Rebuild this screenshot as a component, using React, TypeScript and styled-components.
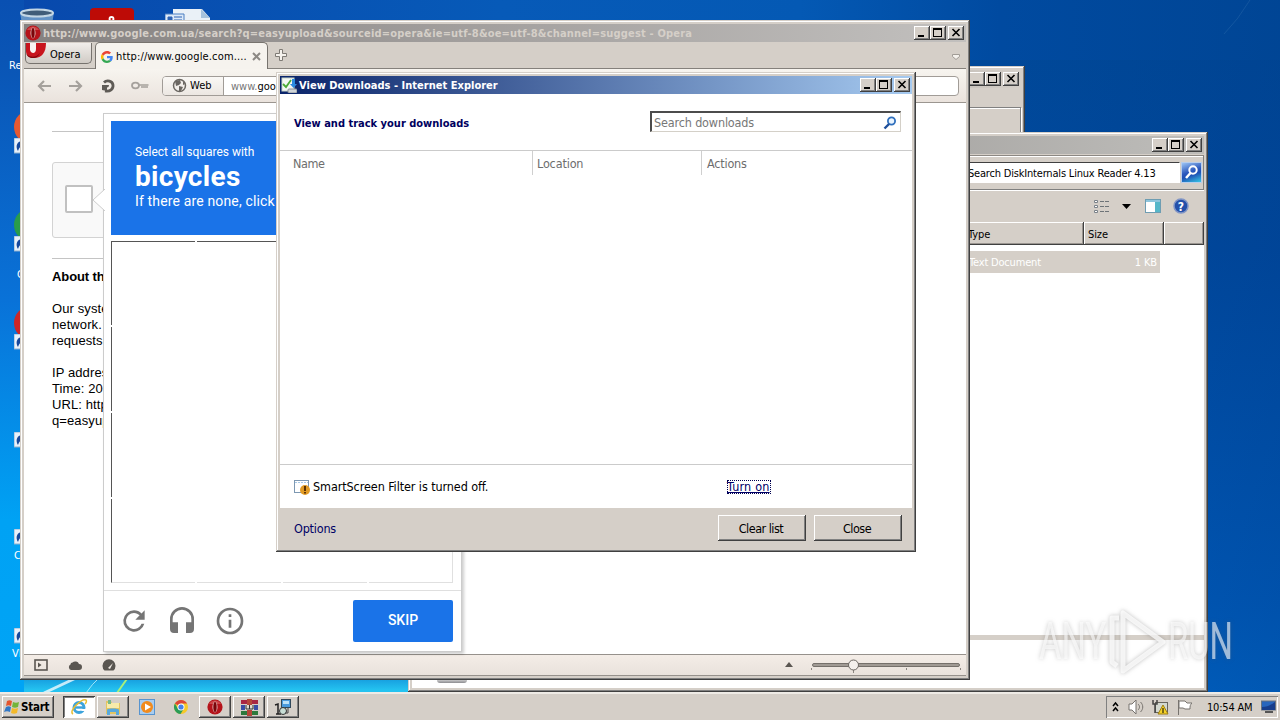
import React from "react";
import styled, { createGlobalStyle } from "styled-components";

const FACE = "#d5cfc8";

const GlobalStyle = createGlobalStyle`
  * { box-sizing: border-box; }
  body {
    margin: 0;
    overflow: hidden;
    font-family: "DejaVu Sans Condensed", "DejaVu Sans", sans-serif;
    font-stretch: condensed;
    font-size: 11px;
    color: #000;
  }
  svg { display: block; flex: none; }
`;

/* ---------- desktop ---------- */

const Desktop = styled.div`
  position: relative;
  width: 1280px;
  height: 720px;
  overflow: hidden;
  background:
    linear-gradient(180deg, transparent 660px, rgba(40, 205, 245, 0.9) 690px) 24px 0 / 396px 100% no-repeat,
    linear-gradient(90deg, transparent 1000px, rgba(0, 50, 120, 0.2) 1280px),
    linear-gradient(180deg, #0950b2 0, #0a55b5 60px, #0972d8 300px, #00a2f4 520px, #00a4f6 690px) 0 0 / 24px 100% no-repeat,
    linear-gradient(90deg, #0848ac 0, #075ab8 500px, #0459b4 800px, #004aa0 1000px, #004a9c 1280px) 0 0 / 100% 60px no-repeat,
    linear-gradient(180deg, #004897 0, #00499f 250px, #0059b8 600px, #0061c2 692px);
`;

const Streaks = styled.svg`
  position: absolute;
  left: 0;
  top: 0;
`;

const DesktopItem = styled.div<{ $x: number; $y: number }>`
  position: absolute;
  left: ${(p) => p.$x}px;
  top: ${(p) => p.$y}px;
  color: #fff;
  white-space: nowrap;
`;

/* ---------- shared window parts ---------- */

const Frame = styled.section<{ $x: number; $y: number; $w: number; $h: number }>`
  position: absolute;
  left: ${(p) => p.$x}px;
  top: ${(p) => p.$y}px;
  width: ${(p) => p.$w}px;
  height: ${(p) => p.$h}px;
  padding: 4px;
  display: flex;
  flex-direction: column;
  background: ${FACE};
  box-shadow: inset -1px -1px #404040, inset 1px 1px ${FACE}, inset -2px -2px #808080,
    inset 2px 2px #fff;
`;

const TitleBar = styled.header<{ $from: string; $to: string; $color?: string }>`
  flex: none;
  height: 18px;
  display: flex;
  align-items: center;
  padding: 0 2px 0 1px;
  background: linear-gradient(90deg, ${(p) => p.$from}, ${(p) => p.$to});
  color: ${(p) => p.$color || "#fff"};
`;

const TitleText = styled.span<{ $ls: number }>`
  flex: 1;
  margin-left: 2px;
  font-weight: 700;
  letter-spacing: ${(p) => p.$ls}px;
  white-space: nowrap;
`;

const Controls = styled.div`
  display: flex;
  margin-left: auto;
`;

const ControlButton = styled.button<{ $gap?: boolean }>`
  width: 16px;
  height: 14px;
  padding: 0;
  margin-left: ${(p) => (p.$gap ? 2 : 0)}px;
  border: 0;
  background: ${FACE};
  box-shadow: inset -1px -1px #404040, inset 1px 1px #fff, inset -2px -2px #808080;
`;

const WindowControls = () => (
  <Controls>
    <ControlButton>
      <svg width="16" height="14"><path d="M4 9h6v2H4z" /></svg>
    </ControlButton>
    <ControlButton>
      <svg width="16" height="14"><path fillRule="evenodd" d="M3 2h9v9H3zM4 4v6h7V4z" /></svg>
    </ControlButton>
    <ControlButton $gap>
      <svg width="16" height="14"><path d="M4.500 3l7 7M11.500 3l-7 7" stroke="#000" strokeWidth="1.600" /></svg>
    </ControlButton>
  </Controls>
);

const Txt = styled.span<{ $ls?: number; $size?: number; $color?: string }>`
  letter-spacing: ${(p) => p.$ls || 0}px;
  font-size: ${(p) => p.$size || 11}px;
  color: ${(p) => p.$color || "inherit"};
  white-space: nowrap;
`;

/* ---------- archive window ---------- */

const ArchivePanel = styled.div`
  height: 60px;
  margin-top: 19px;
  border: 1px solid #808080;
  box-shadow: inset 1px 1px #fff, 1px 1px #fff;
`;

/* ---------- explorer window ---------- */

const AddressStrip = styled.div`
  flex: none;
  display: flex;
  justify-content: flex-end;
  align-items: center;
  height: 35px;
  margin-top: 1px;
  padding: 1px 1px 1px 0;
  gap: 1px;
  border: 1px solid #808080;
  border-top-color: #8c8883;
  box-shadow: inset 0 1px #fff;
`;

const SearchField = styled.div`
  display: flex;
  align-items: center;
  width: 219px;
  height: 21px;
  padding: 1px 0 0 6px;
  background: #fff;
  border: 1px solid #fff;
  border-top: 1px solid #404040;
`;

const SearchButton = styled.div`
  width: 21px;
  height: 21px;
  background: linear-gradient(160deg, #9cc4f4 0, #2b58bd 45%, #1d4fb4 60%, #37c6e4 100%);
  border: 1px solid #b7cdec;
`;

const CommandBar = styled.div`
  flex: none;
  height: 32px;
  display: flex;
  align-items: center;
  justify-content: flex-end;
  padding: 0 12px 1px 0;
  border-top: 1px solid #fff;
`;

const HeaderRow = styled.div`
  flex: none;
  display: flex;
  justify-content: flex-end;
  height: 23px;
`;

const HeaderCell = styled.div<{ $w: number }>`
  width: ${(p) => p.$w}px;
  padding: 6px 0 0 4px;
  box-shadow: inset -1px -1px #404040, inset 1px 1px #fff, inset -2px -2px #9a9590;
`;

const FileArea = styled.div`
  flex: 1;
  padding-top: 6px;
  background: #fff;
`;

const FileRow = styled.div`
  display: flex;
  justify-content: space-between;
  align-items: center;
  width: 748px;
  height: 22px;
  padding: 0 3px 0 557px;
  background: ${FACE};
  color: #fff;
`;

const Splitter = styled.div`
  flex: none;
  height: 5px;
  background: ${FACE};
`;

const DetailsPane = styled.div`
  flex: none;
  height: 48px;
  padding: 39px 0 0 25px;
  background: #fff;
`;

const DriveShape = styled.div`
  width: 30px;
  height: 4px;
  background: linear-gradient(#ddd, #8c8c90);
  border-radius: 0 0 3px 3px;
`;

/* ---------- browser window ---------- */

const TabStrip = styled.div`
  position: relative;
  flex: none;
  display: flex;
  height: 27px;
  padding-left: 1px;
  background: ${FACE};
  border-bottom: 1px solid #85817c;
`;

const OperaMenu = styled.div`
  display: flex;
  align-items: center;
  width: 67px;
  height: 21px;
  margin-top: 1px;
  background: linear-gradient(#f1eeeb, #d0cbc5);
  border: 1px solid #77736e;
  border-top: 0;
  border-radius: 0 0 5px 5px;
`;

const OperaMenuLabel = styled(Txt)`
  margin: 2px 0 0 2px;
`;

const BrowserTab = styled.div`
  display: flex;
  align-items: center;
  width: 173px;
  height: 27px;
  margin: 0 0 0 3px;
  padding: 1px 6px 0 5px;
  background: #f6f3ee;
  border: 1px solid #77736e;
  border-bottom: 0;
  border-radius: 5px 5px 0 0;
`;

const TabLabel = styled(Txt)`
  flex: 1;
  margin-left: 3px;
`;

const NavBar = styled.div`
  flex: none;
  display: flex;
  align-items: center;
  height: 34px;
  padding: 0 7px 0 13px;
  background: linear-gradient(#f7f4ef, #eae3dd);
  border-bottom: 1px solid #9b9690;
`;

const AddressField = styled.div`
  flex: 1;
  display: flex;
  height: 20px;
  margin-left: 13px;
  background: #fff;
  border: 1px solid #a19c97;
  border-radius: 4px;
  overflow: hidden;
`;

const SiteBadge = styled.div`
  display: flex;
  align-items: center;
  gap: 3px;
  width: 61px;
  padding-left: 9px;
  background: linear-gradient(#faf8f5, #ece7e2);
  border-right: 1px solid #a19c97;
`;

const AddressText = styled(Txt)`
  padding: 3px 0 0 7px;
`;

const Page = styled.div`
  position: relative;
  flex: 1;
  padding: 28px 28px 0;
  background: #fff;
  font-family: Arial, "Liberation Sans", sans-serif;
  font-size: 13px;
  line-height: 16px;
`;

const Rule = styled.div`
  width: 302px;
  height: 1px;
  background: #c4c4c4;
`;

const CheckBoxCard = styled.div`
  display: flex;
  align-items: center;
  width: 302px;
  height: 76px;
  margin: 30px 0 20px;
  padding: 0 12px 2px;
  background: #f9f9f9;
  border: 1px solid #d3d3d3;
  border-radius: 3px;
`;

const CheckSquare = styled.div`
  width: 28px;
  height: 28px;
  background: #fff;
  border: 2px solid #c1c1c1;
  border-radius: 2px;
`;

const Para = styled.p<{ $bold?: boolean }>`
  width: 400px;
  margin: 0;
  padding-top: ${(p) => (p.$bold ? 10 : 16)}px;
  font-weight: ${(p) => (p.$bold ? 700 : 400)};
  letter-spacing: ${(p) => (p.$bold ? -0.1 : 0.1)}px;
`;

const Challenge = styled.div`
  position: absolute;
  left: 79px;
  top: 10px;
  width: 359px;
  height: 539px;
  padding: 7px 7px 0;
  display: flex;
  flex-direction: column;
  background: #fff;
  border: 1px solid #ccc;
  box-shadow: 2px 2px 3px rgba(0, 0, 0, 0.2);
`;

const Pointer = styled.svg`
  position: absolute;
  left: -12px;
  top: 75px;
`;

const Prompt = styled.div`
  flex: none;
  height: 114px;
  padding: 22px 24px;
  background: #1a73e8;
  color: #fff;
  font-family: Roboto, sans-serif;
  font-stretch: normal;
  white-space: nowrap;
`;

const PromptLine = styled.div<{ $size: number; $h: number; $bold?: boolean; $ls?: number }>`
  font-size: ${(p) => p.$size}px;
  line-height: ${(p) => p.$h}px;
  font-weight: ${(p) => (p.$bold ? 700 : 400)};
  letter-spacing: ${(p) => p.$ls || 0}px;
`;

const Tiles = styled.div`
  flex: none;
  display: grid;
  grid-template: repeat(4, 84px) / repeat(4, 84px);
  gap: 2px;
  height: 342px;
  margin-top: 6px;
`;

const Tile = styled.div<{ $top: boolean; $left: boolean; $right: boolean; $bottom: boolean }>`
  border-style: solid;
  border-color: #555 #e0e0e0 #e0e0e0 #555;
  border-width: ${(p) => `${+p.$top}px ${+p.$right}px ${+p.$bottom}px ${+p.$left}px`};
`;

const ChallengeFooter = styled.div`
  flex: none;
  display: flex;
  align-items: center;
  gap: 16px;
  height: 61px;
  margin: 7px -7px 0;
  padding: 0 8px 0 14px;
  border-top: 1px solid #dfdfdf;
`;

const SkipButton = styled.button`
  width: 100px;
  height: 42px;
  margin-left: auto;
  padding: 0 0 2px;
  border: 0;
  border-radius: 2px;
  background: #1a73e8;
  color: #fff;
  font: 500 14px Roboto, sans-serif;
`;

const StatusBar = styled.footer`
  flex: none;
  display: flex;
  align-items: center;
  height: 22px;
  padding: 0 5px 0 10px;
  background: linear-gradient(#f4ede7, #e9e2dc);
  border-top: 1px solid #96918c;
  border-bottom: 1px solid #96918c;
`;

const StatusTools = styled.div`
  flex: 1;
  display: flex;
  gap: 20px;
`;

/* ---------- downloads window ---------- */

const DownloadsBody = styled.div`
  flex: 1;
  display: flex;
  flex-direction: column;
  background: #fff;
`;

const DownloadsHead = styled.div`
  display: flex;
  justify-content: space-between;
  height: 57px;
  padding: 17px 11px 0 14px;
  border-bottom: 1px solid #cbcbcb;
`;

const Heading = styled.h1`
  margin: 6px 0 0;
  font-size: 11px;
  font-weight: 700;
  color: #00005e;
`;

const SearchBox = styled.div`
  display: flex;
  align-items: center;
  justify-content: space-between;
  width: 251px;
  height: 21px;
  padding: 1px 3px 0 2px;
  border: 1px solid #d4d0c8;
  border-top: 2px solid #4c4c4c;
  border-left: 2px solid #4c4c4c;
  color: #777;
`;

const ListHead = styled.div`
  display: flex;
  height: 24px;
  color: #6d6d6d;
`;

const ListCol = styled.div<{ $w?: number; $pad: number }>`
  width: ${(p) => (p.$w ? p.$w + "px" : "auto")};
  padding: 5px 0 0 ${(p) => p.$pad}px;
  border-right: ${(p) => (p.$w ? "1px solid #cfcfcf" : "0")};
`;

const FilterRow = styled.div`
  display: flex;
  align-items: center;
  height: 44px;
  margin-top: auto;
  padding-left: 14px;
  border-top: 1px solid #cbcbcb;
`;

const FilterMessage = styled(Txt)`
  width: 414px;
  margin-left: 3px;
`;

const FocusLink = styled.a`
  width: 44px;
  height: 14px;
  outline: 1px dotted #000050;
  outline-offset: -1px;
  font-size: 12.5px;
  line-height: 14px;
  letter-spacing: 0.2px;
  text-decoration: underline;
  white-space: nowrap;
  color: #000066;
`;

const DialogFooter = styled.footer`
  display: flex;
  align-items: center;
  gap: 8px;
  height: 40px;
  padding: 0 10px 0 14px;
`;

const OptionsLink = styled(Txt)`
  flex: 1;
`;

const PushButton = styled.button`
  width: 88px;
  height: 26px;
  padding: 0 2px 0 0;
  border: 0;
  background: ${FACE};
  box-shadow: inset -1px -1px #404040, inset 1px 1px #fff, inset -2px -2px #808080;
  font: 12.5px "DejaVu Sans Condensed", sans-serif;
  letter-spacing: -0.5px;
`;

/* ---------- taskbar ---------- */

const Taskbar = styled.footer`
  position: absolute;
  left: 0;
  bottom: 0;
  width: 100%;
  height: 28px;
  display: flex;
  align-items: center;
  padding: 2px 2px 0;
  background: ${FACE};
  box-shadow: inset 0 2px #eeebe6;
`;

const StartButton = styled.button`
  display: flex;
  align-items: center;
  gap: 1px;
  width: 52px;
  height: 22px;
  margin-right: 9px;
  padding: 0 2px;
  border: 0;
  background: ${FACE};
  box-shadow: inset -1px -1px #404040, inset 1px 1px #fff, inset -2px -2px #808080;
  font: 700 11.5px "DejaVu Sans Condensed", sans-serif;
  letter-spacing: -0.25px;
`;

const shadows = {
  pressed: "inset 1px 1px #404040, inset -1px -1px #fff, inset 2px 2px #808080",
  raised: "inset -1px -1px #404040, inset 1px 1px #fff, inset -2px -2px #808080",
  flat: "none",
};

const TaskItem = styled.div<{ $state: keyof typeof shadows }>`
  display: flex;
  align-items: center;
  justify-content: center;
  width: 32px;
  height: 22px;
  margin-right: 2px;
  background: ${(p) => (p.$state === "pressed" ? "#fff" : FACE)};
  box-shadow: ${(p) => shadows[p.$state]};
`;

const Tray = styled.div`
  display: flex;
  align-items: center;
  width: 172px;
  height: 22px;
  margin-left: auto;
  padding: 0 1px 0 6px;
  box-shadow: inset 1px 1px #808080, inset -1px -1px #fff;
`;

const Clock = styled(Txt)`
  flex: 1;
  margin-left: 15px;
`;

/* ---------- icons ---------- */

const ShortcutArrow = () => (
  <svg width="16" height="16">
    <rect width="15" height="15" fill="#e8f1fa" stroke="#8fb0cf" />
    <path d="M4 13C1 8 3 3 9 3V1l6 5-6 5V8C6 8 5 10 4 13z" fill="#17489c" />
  </svg>
);

const OperaDisc = () => (
  <svg width="16" height="16" viewBox="0 0 16 16">
    <circle cx="8" cy="8" r="7.600" fill="#b5131a" />
    <path d="M2 5a7 7 0 0 1 12 0z" fill="#dd6a69" opacity=".6" />
    <ellipse cx="8" cy="8" rx="2.500" ry="5.400" fill="#e9c9c7" />
    <ellipse cx="8" cy="8" rx="1.700" ry="5" fill="#7a0509" />
  </svg>
);

const OperaRibbon = () => (
  <svg width="22" height="20">
    <path d="M0 0h20c0 9-4 15-12 15C3 15 0 12 0 8z" fill="#c8141d" />
    <path d="M0 10c2 4 9 6 14 0-2 4-4 5-7 5-4 0-6-2-7-5z" fill="#80060c" />
    <path d="M4 0h6v6c0 5-5 5-6 1z" fill="#f8f3f1" />
  </svg>
);

const GoogleG = () => (
  <svg width="12" height="12" viewBox="0 0 48 48">
    <path fill="#EA4335" d="M24 9.5c3.5 0 6.700 1.200 9.200 3.600l6.900-6.900C35.900 2.400 30.500 0 24 0 14.600 0 6.500 5.400 2.600 13.200l8 6.200C12.400 13.700 17.700 9.500 24 9.500z" />
    <path fill="#4285F4" d="M47 24.500c0-1.600-.2-3.100-.4-4.500H24v9h12.900c-.6 3-2.300 5.500-4.800 7.200l7.700 6C44.400 38 47 31.800 47 24.500z" />
    <path fill="#FBBC05" d="M10.500 28.600a14.500 14.500 0 0 1 0-9.200l-8-6.200a24 24 0 0 0 0 21.600z" />
    <path fill="#34A853" d="M24 48c6.500 0 11.900-2.100 15.900-5.800l-7.700-6c-2.200 1.400-4.900 2.300-8.200 2.300-6.300 0-11.600-4.200-13.500-9.900l-8 6.200C6.500 42.600 14.600 48 24 48z" />
  </svg>
);

const ChromeIcon = () => (
  <svg width="16" height="16" viewBox="0 0 16 16">
    <circle cx="8" cy="8" r="7" fill="#f6c928" />
    <path d="M8 8L1.900 4.500A7 7 0 0 1 14.100 4.500H8z" fill="#dc4437" />
    <path d="M8 8L4.900 9.700 1.900 4.500A7 7 0 0 0 7.500 15L11 9.500z" fill="#2a9c57" />
    <circle cx="8" cy="8" r="3.500" fill="#fff" />
    <circle cx="8" cy="8" r="2.600" fill="#4580e8" />
  </svg>
);

const ExplorerE = () => (
  <svg width="18" height="18" viewBox="0 0 18 18">
    <circle cx="9" cy="9.500" r="5" fill="none" stroke="#3ba3dc" strokeWidth="3" />
    <path d="M5 9.500h9" stroke="#3ba3dc" strokeWidth="2.400" />
    <path d="M10.500 11h6v2h-5z" fill="#fff" />
    <path d="M3 16C-2 13 12 0 16 2c1 1 0 3-1 4" fill="none" stroke="#e7bd35" strokeWidth="1.500" />
  </svg>
);

const WindowsFlag = () => (
  <svg width="16" height="16" viewBox="0 0 16 16">
    <path d="M3 2c2-1 3-1 5 0L7 7C5 6 4 6 2 7z" fill="#e5552e" />
    <path d="M9 3c2 1 4 1 6 0l-1 5c-2 1-4 1-6 0z" fill="#73b43b" />
    <path d="M2 8c2-1 3-1 5 0l-1 5c-2-1-4-1-6 0z" fill="#3178c6" />
    <path d="M8 9c2 1 4 1 6 0l-1 5c-2 1-4 1-6 0z" fill="#f3b92a" />
  </svg>
);

const FolderIcon = () => (
  <svg width="18" height="18" viewBox="0 0 18 18">
    <path d="M2 3h5l1 2h8v11H2z" fill="#e2c562" />
    <path d="M3 5h12v5H3z" fill="#f8eba9" />
    <path d="M4 2h3v4H4z" fill="#76b98a" />
    <path d="M3 17v-5c0-2 12-2 12 0v5h-3v-3H6v3z" fill="#58a9dc" />
  </svg>
);

const PlayerIcon = () => (
  <svg width="17" height="17">
    <rect x=".5" y=".5" width="15" height="15" fill="#a9cdef" stroke="#5794cf" />
    <circle cx="8" cy="8" r="6" fill="#f18b1d" />
    <path d="M6 4.500l6 3.500-6 3.500z" fill="#fff" />
  </svg>
);

const ArchiveIcon = () => (
  <svg width="17" height="17">
    <path d="M0 1h17v4H0z" fill="#a72643" />
    <path d="M0 6h17v5H0z" fill="#394da5" />
    <path d="M0 12h17v4H0z" fill="#2d7a3c" />
    <path d="M6 0h5v17H6z" fill="#b5473a" />
    <path d="M4 6h9v5H4z" fill="#dedad1" />
    <path d="M5 6v4h7V6M8.500 6v4" fill="none" stroke="#333" />
  </svg>
);

const InstallerIcon = () => (
  <svg width="18" height="18">
    <rect x="7.500" y="1.500" width="9" height="8" fill="#4a9adc" stroke="#30485a" />
    <path d="M9 3h6v3H9z" fill="#bce1f7" />
    <path d="M1 7l3-1v10M2 16h5" fill="none" stroke="#222" strokeWidth="1.500" />
    <circle cx="9" cy="13" r="3.500" fill="#c8ded5" stroke="#333" />
    <path d="M14 10v5h-3" fill="none" stroke="#444" />
  </svg>
);

const DownloadsIcon = () => (
  <svg width="16" height="16">
    <rect x="1" y="1" width="12" height="13" fill="#f5f8f4" stroke="#c9d5c8" />
    <path d="M2 7l3 3 5-7" stroke="#4cab37" strokeWidth="1.800" fill="none" />
    <path d="M11 2h3v5h2l-3.500 4L9 7h2z" fill="#2b8be0" />
    <rect x="7" y="12" width="9" height="4" rx="1" fill="#cfd4d8" stroke="#8b9196" />
  </svg>
);

const Magnifier = () => (
  <svg width="14" height="14">
    <circle cx="8.500" cy="5" r="3.600" fill="#e9f4ff" stroke="#2f6fbd" strokeWidth="1.800" />
    <path d="M6 8L1.500 12.500" stroke="#1f4f9b" strokeWidth="2.400" />
  </svg>
);

const FilterIcon = () => (
  <svg width="16" height="16">
    <rect x=".5" y="1.500" width="14" height="12" fill="#fff" stroke="#7d98b2" />
    <path d="M1 3.500h13" stroke="#a8c9e6" strokeDasharray="2 1" />
    <circle cx="11" cy="11" r="5" fill="#e29b25" />
    <path d="M10 7h2v5h-2zM10 13h2v1.500h-2z" fill="#5c3204" />
  </svg>
);

const Globe = () => (
  <svg width="15" height="15">
    <circle cx="7.500" cy="7.500" r="6" fill="#f2eeea" stroke="#6b6762" strokeWidth="1.500" />
    <path d="M3 3l5-1 1 3-2 2-3 1zM7 8l4 1-2 4H7zM11 3l2 3-2 1z" fill="#6b6762" />
  </svg>
);

const NavIcons = () => (
  <svg width="112" height="20" fill="none" stroke="#a5a19c" strokeWidth="2.200">
    <path d="M14 10H2M7 5l-5 5 5 5M32 10h12M39 5l5 5-5 5" />
    <path d="M67 6.500c3-3 8.500-1.500 9 2.500.5 4-3 7-8 6" stroke="#5f5b56" strokeWidth="2.800" />
    <path d="M65 9h7l-.5 2-1.500.5v3.500l-5-1z" fill="#5f5b56" stroke="none" />
    <ellipse cx="98.500" cy="9.500" rx="3.500" ry="2.800" strokeWidth="1.800" />
    <path d="M102 9h9.500M104 11h7" strokeWidth="1.600" />
  </svg>
);

const DesktopIcons = () => (
  <>
    <DesktopItem $x={18} $y={7}>
      <svg width="38" height="30">
        <path d="M2 5l4 25h26l4-25z" fill="#7ca6cc" opacity=".8" />
        <ellipse cx="19" cy="6" rx="16" ry="3.500" fill="#405d79" stroke="#c3d6e4" strokeWidth="2" />
      </svg>
    </DesktopItem>
    <DesktopItem $x={90} $y={8}>
      <svg width="44" height="30">
        <rect width="44" height="40" rx="4" fill="#bd0b06" />
        <circle cx="21.500" cy="11" r="2" fill="none" stroke="#fff" strokeWidth="1.800" />
      </svg>
    </DesktopItem>
    <DesktopItem $x={165} $y={8}>
      <svg width="46" height="30">
        <path d="M8 1h29l8 9v20H8z" fill="#eaf1f7" />
        <path d="M36 1v9h9z" fill="#a7c3dc" />
        <path d="M0 6h19v24H0z" fill="#dce9f7" stroke="#4b7fc2" />
        <path d="M3 9h4v5H3zM9 9h8M9 12h8" fill="#2d63b5" stroke="#2d63b5" />
      </svg>
    </DesktopItem>
    <DesktopItem $x={9} $y={59}>Recycle Bin</DesktopItem>
    {[
      { y: 110, color: "#e65931" },
      { y: 208, color: "#299c4b" },
      { y: 306, color: "#cd2627" },
    ].map((d) => (
      <DesktopItem key={d.y} $x={14} $y={d.y}>
        <svg width="34" height="34"><circle cx="17" cy="17" r="17" fill={d.color} /></svg>
      </DesktopItem>
    ))}
    {[138, 236, 334, 432, 529, 628].map((y) => (
      <DesktopItem key={y} $x={14} $y={y}><ShortcutArrow /></DesktopItem>
    ))}
    <DesktopItem $x={17} $y={268}>Google</DesktopItem>
    <DesktopItem $x={14} $y={549}>CCleaner</DesktopItem>
    <DesktopItem $x={12} $y={647}>VLC media</DesktopItem>
  </>
);

const ArchiveWindow = () => (
  <Frame $x={620} $y={66} $w={405} $h={90}>
    <TitleBar $from="#808080" $to={FACE}>
      <WindowControls />
    </TitleBar>
    <ArchivePanel />
  </Frame>
);

const ExplorerWindow = () => (
  <Frame $x={408} $y={132} $w={800} $h={560}>
    <TitleBar $from="#858280" $to="#bebdba">
      <WindowControls />
    </TitleBar>
    <AddressStrip>
      <SearchField>
        <Txt $ls={-0.19}>Search DiskInternals Linux Reader 4.13</Txt>
      </SearchField>
      <SearchButton>
        <svg width="19" height="19" fill="none" stroke="#fff">
          <circle cx="11" cy="7" r="3.700" strokeWidth="2" />
          <path d="M8.500 10L4 15" strokeWidth="2.500" />
        </svg>
      </SearchButton>
    </AddressStrip>
    <CommandBar>
      <svg width="100" height="20">
        <path d="M2.500 4.500h3v2h-3zM2.500 9.500h3v2h-3zM2.500 14.500h3v2h-3z" fill="#fff" stroke="#7b828a" />
        <path d="M8 5.500h4M13 5.500h4M8 10.500h4M13 10.500h4M8 15.500h4M13 15.500h4" stroke="#6e7478" />
        <path d="M30 8h9l-4.500 5z" />
        <rect x="53.500" y="3.500" width="15" height="13" fill="#fff" stroke="#6e9db2" />
        <path d="M54 5h14" stroke="#8ec5dc" strokeWidth="2" />
        <path d="M63 6h5v10h-5z" fill="#56b7c9" />
        <circle cx="89" cy="10" r="7" fill="#2450aa" stroke="#8195c6" strokeWidth="1.500" />
        <text x="89" y="14.500" fill="#fff" fontSize="12" fontWeight="700" textAnchor="middle">?</text>
      </svg>
    </CommandBar>
    <HeaderRow>
      <HeaderCell $w={120}><Txt $ls={-0.05}>Type</Txt></HeaderCell>
      <HeaderCell $w={80}><Txt $ls={-0.1}>Size</Txt></HeaderCell>
      <HeaderCell $w={40} />
    </HeaderRow>
    <FileArea>
      <FileRow>
        <Txt $ls={-0.18}>Text Document</Txt>
        <Txt $ls={-0.1}>1 KB</Txt>
      </FileRow>
    </FileArea>
    <Splitter />
    <DetailsPane><DriveShape /></DetailsPane>
  </Frame>
);

const tiles = Array.from({ length: 16 }, (_, i) => i);

const ChallengePanel = () => (
  <Challenge>
    <Pointer width="13" height="22">
      <path d="M13 0L1 11l12 11" fill="#fff" stroke="#ccc" />
    </Pointer>
    <Prompt>
      <PromptLine $size={12} $h={18}>Select all squares with</PromptLine>
      <PromptLine $size={28} $h={31} $bold $ls={0.3}>bicycles</PromptLine>
      <PromptLine $size={14} $h={19} $ls={0.15}>If there are none, click skip</PromptLine>
    </Prompt>
    <Tiles>
      {tiles.map((i) => (
        <Tile key={i} $top={i < 4} $bottom={i > 11} $left={i % 4 === 0} $right={i % 4 === 3} />
      ))}
    </Tiles>
    <ChallengeFooter>
      <svg width="32" height="32" viewBox="0 0 24 24" fill="#757575">
        <path d="M17.650 6.350A7.960 7.960 0 0 0 12 4a8 8 0 1 0 7.730 10h-2.080A6 6 0 1 1 12 6c1.660 0 3.140.69 4.220 1.780L13 11h7V4z" />
      </svg>
      <svg width="32" height="32" viewBox="0 0 24 24" fill="#757575">
        <path d="M12 1.500a9 9 0 0 0-9 9v7.500a3 3 0 0 0 3 3h3v-8H5v-2.500a7 7 0 0 1 14 0V13h-4v8h3a3 3 0 0 0 3-3v-7.500a9 9 0 0 0-9-9z" />
      </svg>
      <svg width="32" height="32" viewBox="0 0 24 24" fill="#757575">
        <path d="M11 17h2v-6h-2zm1-15a10 10 0 1 0 0 20 10 10 0 0 0 0-20zm0 18a8 8 0 1 1 0-16 8 8 0 0 1 0 16zM11 9h2V7h-2z" />
      </svg>
      <SkipButton>SKIP</SkipButton>
    </ChallengeFooter>
  </Challenge>
);

const OperaWindow = () => (
  <Frame $x={20} $y={20} $w={950} $h={660}>
    <TitleBar $from="#858180" $to="#c2c0be" $color={FACE}>
      <OperaDisc />
      <TitleText $ls={0.18}>
        http://www.google.com.ua/search?q=easyupload&sourceid=opera&ie=utf-8&oe=utf-8&channel=suggest - Opera
      </TitleText>
      <WindowControls />
    </TitleBar>
    <TabStrip>
      <OperaMenu>
        <OperaRibbon />
        <OperaMenuLabel $ls={0.05}>Opera</OperaMenuLabel>
      </OperaMenu>
      <BrowserTab>
        <GoogleG />
        <TabLabel $ls={0.15}>http://www.google.com....</TabLabel>
        <svg width="9" height="9"><path d="M1 1l7 7M8 1L1 8" stroke="#8d8985" strokeWidth="2" /></svg>
      </BrowserTab>
      <svg width="697" height="26">
        <path d="M11.500 7.500h3v4h4v3h-4v4h-3v-4h-4v-3h4z" fill="#f5f2ed" stroke="#7e7a75" />
        <path d="M684.500 12.500h7v2l-3.500 3-3.500-3z" fill="#f5f2ed" stroke="#a19c96" />
      </svg>
    </TabStrip>
    <NavBar>
      <NavIcons />
      <AddressField>
        <SiteBadge>
          <Globe />
          <Txt>Web</Txt>
        </SiteBadge>
        <AddressText>
          <Txt $color="#777">www.</Txt>goo
        </AddressText>
      </AddressField>
    </NavBar>
    <Page>
      <Rule />
      <CheckBoxCard><CheckSquare /></CheckBoxCard>
      <Rule />
      <Para $bold>About this page</Para>
      <Para>
        Our systems have detected unusual<br />network. This page checks to see<br />requests, and not a robot.
      </Para>
      <Para>
        IP address:<br />Time: 2022<br />URL: http://www.google.com.ua/search?<br />q=easyupload
      </Para>
      <ChallengePanel />
    </Page>
    <StatusBar>
      <StatusTools>
        <svg width="14" height="12">
          <rect x="1" y="1" width="12" height="10" fill="none" stroke="#5a5651" strokeWidth="1.600" />
          <path d="M4 3.500l3.500 2.500L4 8.500z" fill="#5a5651" />
        </svg>
        <svg width="14" height="12"><path d="M3 11a3 3 0 0 1-.5-5.500 2 2 0 0 1 2-2A4 4 0 0 1 11 5a3 3 0 0 1 0 6z" fill="#5a5651" /></svg>
        <svg width="14" height="12">
          <path d="M2.500 11.500A6.500 6.500 0 1 1 11.500 11.500z" fill="#5a5651" />
          <path d="M6 9l5-5-3 6z" fill="#f1ebe5" />
        </svg>
      </StatusTools>
      <svg width="177" height="18">
        <path d="M1 11l4-5 4 5z" fill="#5a5651" />
        <rect x="28.500" y="7.500" width="147" height="3" rx="1.500" fill="#a09a94" stroke="#75706b" />
        <path d="M27.500 12v2M69.500 13v4M122.500 12v2M176.500 12v2" stroke="#8c8782" />
        <circle cx="69.500" cy="9" r="5" fill="#f4f0ec" stroke="#6c6762" />
      </svg>
    </StatusBar>
  </Frame>
);

const DownloadsWindow = () => (
  <Frame $x={276} $y={72} $w={640} $h={480}>
    <TitleBar $from="#0a246a" $to="#a6caf0">
      <DownloadsIcon />
      <TitleText $ls={0.02}>View Downloads - Internet Explorer</TitleText>
      <WindowControls />
    </TitleBar>
    <DownloadsBody>
      <DownloadsHead>
        <Heading>View and track your downloads</Heading>
        <SearchBox>
          <Txt $size={12.500} $ls={-0.15}>Search downloads</Txt>
          <Magnifier />
        </SearchBox>
      </DownloadsHead>
      <ListHead>
        <ListCol $w={253} $pad={13}><Txt $size={12.500} $ls={-0.4}>Name</Txt></ListCol>
        <ListCol $w={169} $pad={4}><Txt $size={12.500} $ls={-0.15}>Location</Txt></ListCol>
        <ListCol $pad={5}><Txt $size={12.500} $ls={-0.2}>Actions</Txt></ListCol>
      </ListHead>
      <FilterRow>
        <FilterIcon />
        <FilterMessage $size={12.500} $ls={-0.09}>SmartScreen Filter is turned off.</FilterMessage>
        <FocusLink>Turn on</FocusLink>
      </FilterRow>
    </DownloadsBody>
    <DialogFooter>
      <OptionsLink $size={12.500} $ls={-0.2} $color="#000066">Options</OptionsLink>
      <PushButton>Clear list</PushButton>
      <PushButton>Close</PushButton>
    </DialogFooter>
  </Frame>
);

const WatermarkLayer = styled.svg`
  position: absolute;
  left: 1030px;
  top: 600px;
  font-stretch: normal;
  filter: drop-shadow(0 0 2px rgba(90, 90, 90, 0.5));
`;

const Watermark = () => (
  <WatermarkLayer width="240" height="90" fill="#fff" fillOpacity=".6" fontFamily="Roboto" fontSize="52" fontWeight="400">
    <text x="9" y="59" textLength="67" lengthAdjust="spacingAndGlyphs">ANY</text>
    <text x="138" y="59" textLength="65" lengthAdjust="spacingAndGlyphs">RUN</text>
    <g fill="none" stroke="#fff" strokeOpacity=".75" strokeWidth="5" strokeLinejoin="round">
      <path d="M93 13v58l40-29z" />
      <path d="M89 18h-7v44l5 4" />
    </g>
  </WatermarkLayer>
);

const taskItems: { state: keyof typeof shadows; icon: React.ReactNode }[] = [
  { state: "pressed", icon: <ExplorerE /> },
  { state: "raised", icon: <FolderIcon /> },
  { state: "flat", icon: <PlayerIcon /> },
  { state: "flat", icon: <ChromeIcon /> },
  { state: "raised", icon: <OperaDisc /> },
  { state: "raised", icon: <ArchiveIcon /> },
  { state: "raised", icon: <InstallerIcon /> },
];

const DesktopTaskbar = () => (
  <Taskbar>
    <StartButton><WindowsFlag />Start</StartButton>
    {taskItems.map((item, i) => (
      <TaskItem key={i} $state={item.state}>{item.icon}</TaskItem>
    ))}
    <Tray>
      <svg width="80" height="18">
        <path d="M1 8l2.500-3L6 8M1 13l2.500-3L6 13" fill="none" stroke="#000" strokeWidth="1.500" />
        <path d="M17 6h3l4-4v14l-4-4h-3z" fill="#fff" stroke="#77736e" />
        <path d="M26 6c2 2 2 4 0 6M28.500 4c3 3 3 7 0 10" fill="none" stroke="#77736e" />
        <rect x="43.500" y="4.500" width="12" height="10" fill="#d3d8d0" stroke="#67645e" />
        <path d="M41 2v4h4V2M43 6v9" fill="none" stroke="#444" strokeWidth="1.500" />
        <path d="M51 7l5 9H46z" fill="#f6d328" stroke="#9e7d10" />
        <path d="M51 10v5" stroke="#000" />
        <path d="M66.500 2v15M67 3h6l2 2h5c-2 2-2 3-2 6h-5l-2-1h-4z" fill="#fff" stroke="#77736e" />
      </svg>
      <Clock $ls={-0.2}>10:54 AM</Clock>
      <svg width="16" height="14">
        <rect x=".5" y="1" width="14" height="9" fill="#2866bd" stroke="#69737e" />
        <path d="M1 7c5 0 9-2 13-5v8H1z" fill="#173e8c" />
        <path d="M4 12h8" stroke="#555" strokeWidth="2" />
      </svg>
    </Tray>
  </Taskbar>
);

const App = () => (
  <Desktop>
    <GlobalStyle />
    <Streaks width="1280" height="720" fill="none">
      <path d="M1250 0q-12 20-26 34" stroke="#4c86bd" strokeOpacity=".25" />
      <path d="M44 693l32-15" stroke="#fff" strokeOpacity=".75" strokeWidth="3" />
      <path d="M86 693q6-9 14-16" stroke="#d7fbff" strokeOpacity=".7" />
      <path d="M117 693l12-17" stroke="#a8f07b" strokeWidth="2" />
    </Streaks>
    <DesktopIcons />
    <ArchiveWindow />
    <ExplorerWindow />
    <OperaWindow />
    <DownloadsWindow />
    <Watermark />
    <DesktopTaskbar />
  </Desktop>
);

export default App;
